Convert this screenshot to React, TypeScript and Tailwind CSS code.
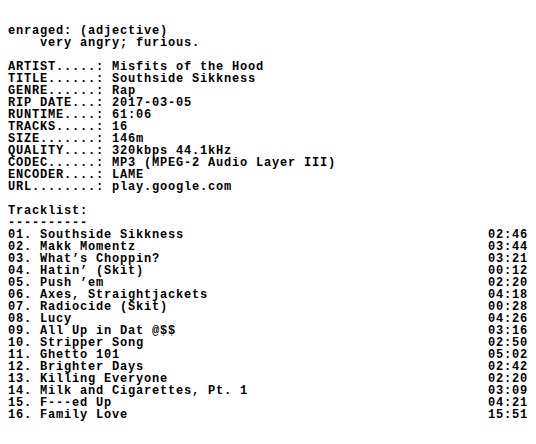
import React from "react";

const tracks: [string, string][] = [
  ["Southside Sikkness", "02:46"],
  ["Makk Momentz", "03:44"],
  ["What’s Choppin?", "03:21"],
  ["Hatin’ (Skit)", "00:12"],
  ["Push ’em", "02:20"],
  ["Axes, Straightjackets", "04:18"],
  ["Radiocide (Skit)", "00:28"],
  ["Lucy", "04:26"],
  ["All Up in Dat @$$", "03:16"],
  ["Stripper Song", "02:50"],
  ["Ghetto 101", "05:02"],
  ["Brighter Days", "02:42"],
  ["Killing Everyone", "02:20"],
  ["Milk and Cigarettes, Pt. 1", "03:09"],
  ["F---ed Up", "04:21"],
  ["Family Love", "15:51"],
];

const header = `enraged: (adjective)
    very angry; furious.

ARTIST.....: Misfits of the Hood
TITLE......: Southside Sikkness
GENRE......: Rap
RIP DATE...: 2017-03-05
RUNTIME....: 61:06
TRACKS.....: 16
SIZE.......: 146m
QUALITY....: 320kbps 44.1kHz
CODEC......: MP3 (MPEG-2 Audio Layer III)
ENCODER....: LAME
URL........: play.google.com

Tracklist:
----------`;

export default function App() {
  return (
    <div className="w-[536px] h-[444px] bg-white text-black overflow-hidden pt-[25px] pl-2">
      <pre
        className="m-0 whitespace-pre font-bold text-[12px] leading-[12px] tracking-[0.8px]"
        style={{ fontFamily: '"Liberation Mono", "DejaVu Sans Mono", monospace' }}
      >
        {header}
      </pre>
      <div
        className="w-[520px] font-bold text-[12px] leading-[12px] tracking-[0.8px]"
        style={{ fontFamily: '"Liberation Mono", "DejaVu Sans Mono", monospace' }}
      >
        {tracks.map(([t, d], i) => (
          <div key={i} className="flex justify-between whitespace-pre">
            <span>{`${String(i + 1).padStart(2, "0")}. ${t}`}</span>
            <span>{d}</span>
          </div>
        ))}
      </div>
    </div>
  );
}
